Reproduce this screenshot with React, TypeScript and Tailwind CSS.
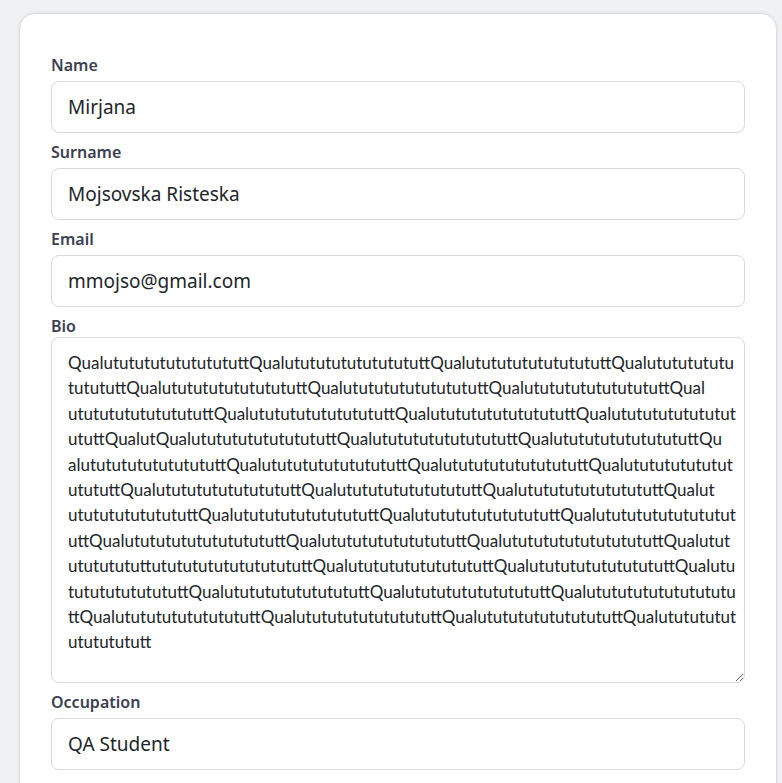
import React from "react";

const bioLines = [
  "QualutututututututututtQualutututututututututtQualutututututututututtQualutututututu",
  "tutututtQualutututututututututtQualutututututututututtQualutututututututututtQual",
  "utututututututututtQualutututututututututtQualutututututututututtQualutututututututut",
  "ututtQualutQualutututututututututtQualutututututututututtQualutututututututututtQu",
  "alutututututututututtQualutututututututututtQualutututututututututtQualututututututut",
  "utututtQualutututututututututtQualutututututututututtQualutututututututututtQualut",
  "ututututututututtQualutututututututututtQualutututututututututtQualututututututututut",
  "uttQualututututututututututtQualutututututututututtQualututututututututututtQualutut",
  "utututututtututututututututututtQualutututututututututtQualutututututututututtQualutu",
  "tutututututututtQualutututututututututtQualutututututututututtQualutututututututututu",
  "ttQualutututututututututtQualutututututututututtQualutututututututututtQualututututut",
  "utututututt",
];

function Field({ label, value }: { label: string; value: string }) {
  return (
    <div className="mb-[7px]">
      <label className="block text-[16px] leading-6 font-semibold text-[#3b4150] mb-1">
        {label}
      </label>
      <input
        type="text"
        readOnly
        value={value}
        className="block w-full h-[52px] px-4 text-[19px] text-[#212529] bg-white border border-[#d6d9de] rounded-lg outline-none"
      />
    </div>
  );
}

export default function App() {
  return (
    <div
      className="min-h-screen bg-[#f0f1f3] pl-[19px] pr-[5px] pt-[13px]"
      style={{ fontFamily: '"Noto Sans", "Open Sans", sans-serif' }}
    >
      <div className="bg-white border border-[#d9dce1] shadow-[0_0_0_2px_#e9ebee] rounded-2xl px-[31px] pt-[39px] pb-10">
        <Field label="Name" value="Mirjana" />
        <Field label="Surname" value="Mojsovska Risteska" />
        <Field label="Email" value="mmojso@gmail.com" />
        <div className="mb-[7px]">
          <label className="block text-[16px] leading-6 font-semibold text-[#3b4150]">
            Bio
          </label>
          <textarea
            readOnly
            wrap="off"
            value={bioLines.join("\n")}
            className="block w-full h-[346px] -mt-px px-4 pt-3 text-[17px] leading-[25.4px] text-[#212529] bg-white border border-[#d6d9de] rounded-lg outline-none whitespace-pre overflow-hidden resize-y"
            style={{ fontFamily: "Lato, sans-serif" }}
          />
        </div>
        <Field label="Occupation" value="QA Student" />
      </div>
    </div>
  );
}
